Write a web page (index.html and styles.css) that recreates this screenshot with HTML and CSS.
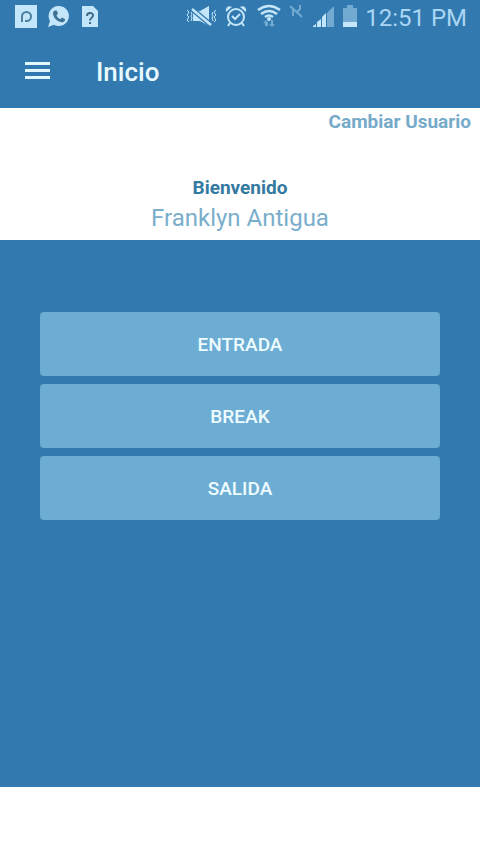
FILE: index.html
```html
<!DOCTYPE html>
<html lang="es">
<head>
<meta charset="utf-8">
<meta name="viewport" content="width=device-width, initial-scale=1">
<title>Inicio</title>
<link rel="stylesheet" href="styles.css">
</head>
<body>
<div class="status-bar">
  <div class="status-group notifications">
    <svg width="22" height="24" viewBox="0 0 22 24" aria-hidden="true">
      <path class="fill" d="M0 1h22v23H0z"/>
      <path class="ink-line" d="M7 18V12.500a4.500 4.500 0 1 1 4.500 4.500H10"/>
    </svg>
    <svg width="22" height="24" viewBox="0 0 22 24" aria-hidden="true">
      <path class="fill" d="M11 2a10 10 0 1 1-5 18.700L0 23l2-6A10 10 0 0 1 11 2z"/>
      <path class="ink" d="M7 6.500l2 .3 1 3-1.500 1.800c1 1.800 2 2.700 3.800 3.600l1.700-1.700 3 1.500c.2 2.500-1.500 3.500-3.500 3.200C9 17.500 5.500 14 5 9.500 5 8 5.800 6.700 7 6.500z"/>
    </svg>
    <svg width="18" height="24" viewBox="0 0 18 24" aria-hidden="true">
      <path class="fill" d="M1 2h11l5 5v16H1z"/>
      <path class="ink-line bold" d="M6 12c0-4 6-4 6-.5 0 2.500-3 2-3 5M9 18v2"/>
    </svg>
  </div>
  <div class="status-group system">
    <svg width="31" height="24" viewBox="0 0 31 24" aria-hidden="true">
      <path class="line wave" d="M1 6l2 2-2 3 2 2-2 3 2 2M5 8l1 2-1 2 1 2-1 3M27 8l-1 2 1 2-1 2 1 3M30 6l-2 2 2 3-2 2 2 3-2 2"/>
      <path class="fill" d="M7 7h7l9-5v20l-9-5H7z"/>
      <path class="cut" d="M6 5l19 16"/>
      <path class="line heavy" d="M6 5l19 16"/>
    </svg>
    <svg width="22" height="24" viewBox="0 0 22 24" aria-hidden="true">
      <circle class="line" cx="11" cy="13" r="8"/>
      <path class="line" d="M7 12l3 3 5-5M5 19l-2 3M17 19l2 3"/>
      <path class="fill" d="M1 8C0 4 3 1 7 3zM21 8c1-4-2-7-6-5z"/>
    </svg>
    <svg class="wifi" width="24" height="24" viewBox="0 0 24 24" aria-hidden="true">
      <path class="line heavy" d="M1 6q11-8 22 0M4 10q8-6 16 0M8 13q4-3 8 0"/>
      <circle class="fill" cx="12" cy="15" r="2"/>
      <path class="fill dim" d="M9 16l2 3v3H8v-3H6zM14 16h2v4h2l-3 3-3-3h2z"/>
    </svg>
    <svg width="16" height="24" viewBox="0 0 16 24" aria-hidden="true">
      <path class="line dim" d="M1 2l12 11M4 5v7M11 1v4l-3 3"/>
    </svg>
    <svg width="22" height="24" viewBox="0 0 22 24" aria-hidden="true">
      <path class="fill dim" d="M14 9l7-7v21h-7z"/>
      <path class="fill" d="M0 22l3-2v3H0zM4 18l4-3v8H4zM9 13l4-4v14H9z"/>
    </svg>
    <svg width="14" height="24" viewBox="0 0 14 24" aria-hidden="true">
      <path class="fill dim" d="M4 1h6v3h4v14H0V4h4z"/>
      <path class="fill" d="M0 18h14v5H0z"/>
    </svg>
    <time class="clock" datetime="12:51">12:51 PM</time>
  </div>
</div>
<header class="app-bar">
  <button class="menu-button" type="button" aria-label="Menú">
    <svg width="26" height="20" viewBox="0 0 26 20" aria-hidden="true">
      <path class="menu-lines" d="M1 0h25v3H1zM1 7h25v3H1zM1 14h25v3H1z"/>
    </svg>
  </button>
  <h1 class="title">Inicio</h1>
</header>
<section class="welcome">
  <a class="switch-user" href="#">Cambiar Usuario</a>
  <div class="greeting">
    <h2 class="hello">Bienvenido</h2>
    <p class="user-name">Franklyn Antigua</p>
  </div>
</section>
<main class="actions">
  <button class="action" type="button">ENTRADA</button>
  <button class="action" type="button">BREAK</button>
  <button class="action" type="button">SALIDA</button>
</main>
<footer class="footer"></footer>
</body>
</html>
```
FILE: styles.css
```css
:root {
  --blue: #3179af;
  --light: #6dadd4;
  --icon: #c4e6fa;
}

* {
  box-sizing: border-box;
}

body {
  margin: 0;
  min-height: 100vh;
  display: flex;
  flex-direction: column;
  background: #fff;
  font-family: Roboto, "Liberation Sans", sans-serif;
}

svg {
  display: block;
  flex: none;
}

.status-bar {
  display: flex;
  justify-content: space-between;
  height: 36px;
  padding: 4px 13px 0 15px;
  background: var(--blue);
}

.status-group {
  display: flex;
  align-items: flex-start;
}

.notifications {
  gap: 11px;
}

.system {
  gap: 8px;
}

.wifi {
  margin-left: 2px;
}

.clock {
  color: #a9d6f3;
  font-size: 24px;
  line-height: 28px;
  white-space: nowrap;
}

.fill {
  fill: var(--icon);
}

.line {
  fill: none;
  stroke: var(--icon);
  stroke-width: 2;
}

.wave {
  stroke-width: 1;
}

.cut {
  stroke: var(--blue);
  stroke-width: 5;
}

.heavy {
  stroke-width: 2.5;
}

.dim {
  opacity: 0.45;
}

.ink {
  fill: #3e7396;
}

.ink-line {
  fill: none;
  stroke: #4d7f9f;
  stroke-width: 2;
}

.bold {
  stroke: #3e6b88;
}

.app-bar {
  display: flex;
  align-items: center;
  gap: 46px;
  height: 72px;
  padding: 0 24px;
  background: var(--blue);
}

.menu-button {
  padding: 0;
  border: 0;
  background: none;
  cursor: pointer;
}

.menu-lines {
  fill: #e2f8ff;
}

.title {
  margin: 0;
  color: #e8faff;
  font-size: 26px;
  font-weight: 500;
  line-height: 32px;
}

.welcome {
  display: flex;
  flex-direction: column;
  gap: 40px;
  height: 132px;
  padding: 2px 9px 0;
}

.switch-user {
  align-self: flex-end;
  color: #75aac8;
  font-size: 19px;
  font-weight: 700;
  line-height: 24px;
  text-decoration: none;
}

.greeting {
  text-align: center;
}

.hello {
  margin: 0;
  color: #34799f;
  font-size: 19px;
  font-weight: 700;
  line-height: 28px;
}

.user-name {
  margin: 0;
  color: #7aaecb;
  font-size: 24px;
  line-height: 32px;
}

.actions {
  flex: 1;
  display: flex;
  flex-direction: column;
  gap: 8px;
  padding: 72px 40px;
  background: var(--blue);
}

.action {
  height: 64px;
  padding: 0;
  border: 0;
  border-radius: 4px;
  background: var(--light);
  color: #eefcff;
  font-family: inherit;
  font-size: 19px;
  font-weight: 500;
  cursor: pointer;
}

.footer {
  height: 67px;
  background: #fff;
}
```
